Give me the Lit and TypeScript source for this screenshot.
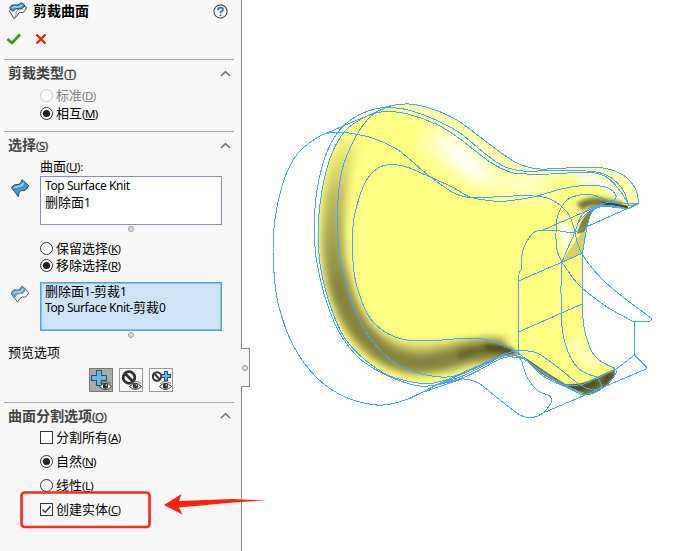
import { LitElement, html, svg, css } from "lit";
import { customElement, property } from "lit/decorators.js";
import { classMap } from "lit/directives/class-map.js";

type Pt = [number, number];

// Smooth cubic path through a list of points.
function smooth(p: number[], closed = false): string {
  const q: Pt[] = [];
  for (let i = 0; i < p.length; i += 2) q.push([p[i], p[i + 1]]);
  const n = q.length;
  const at = (i: number): Pt => (closed ? q[(i + n) % n] : q[Math.max(0, Math.min(n - 1, i))]);
  let d = `M${q[0][0]} ${q[0][1]}`;
  for (let i = 0; i < (closed ? n : n - 1); i++) {
    const a = at(i - 1), b = at(i), c = at(i + 1), e = at(i + 2);
    d += `C${b[0] + (c[0] - a[0]) / 6} ${b[1] + (c[1] - a[1]) / 6} ${c[0] - (e[0] - b[0]) / 6} ${c[1] - (e[1] - b[1]) / 6} ${c[0]} ${c[1]}`;
  }
  return d + (closed ? "Z" : "");
}

const BODY = smooth([
  318, 223, 322, 190, 332, 153, 345, 131, 360, 119, 375, 112, 392, 106, 403, 104, 415, 104, 438, 111,
  460, 122, 493, 147, 507, 157, 520, 164, 540, 169, 577, 167, 603, 168, 623, 175, 635, 188, 639, 203,
  628, 209, 612, 207, 600, 207, 592, 212, 587, 227, 583, 253, 582, 278, 582, 303, 584, 327, 592, 352, 602, 362,
  615, 369, 614, 376, 603, 388, 585, 395, 567, 387, 543, 375, 523, 358, 510, 356, 500, 358, 480, 367,
  460, 376, 432, 383, 418, 383, 392, 376, 365, 360, 345, 337, 332, 310, 322, 277, 318, 250,
], true);

const EDGES: number[][] = [
  // outer sketch profile
  [328, 133, 318, 137, 298, 153, 285, 177, 277, 207, 273.5, 233, 273.5, 265, 278, 303, 293, 345, 317, 378, 345, 397, 372, 404.5, 388, 404.5, 408, 399, 425, 391, 440, 383, 465, 375, 500, 357],
  [325, 134, 332, 132.5, 345, 132.5, 358, 134.5, 375, 139, 398, 150, 428, 175, 452, 192, 466, 197, 482, 197.5, 513, 196, 533, 196, 550, 199, 567, 212, 574, 228, 578, 245, 586, 260, 603, 280, 623, 297, 647, 315, 651.5, 319, 649, 321.5],
  [325, 134, 350, 123, 372, 114, 385, 108, 398, 104.5, 415, 104.5, 438, 111, 460, 122, 493, 147, 507, 157, 520, 164.5, 540, 169, 577, 167.5, 603, 168, 623, 175, 635, 188, 639, 203],
  // rim loops
  [629, 206, 623, 190, 610, 177, 593, 171.5, 557, 170.5, 523, 171, 503, 166, 483, 152, 460, 133, 438, 121, 412, 111, 392, 107.5, 375, 109, 355, 117, 338, 132, 325, 157, 317, 190, 314.5, 217, 314.5, 240, 317, 263, 325, 297, 338, 330, 358, 357, 382, 373, 412, 384.5, 432, 385.5, 465, 377, 500, 359, 512, 357, 523, 359],
  [629, 206, 621, 192, 608, 178, 595, 173, 577, 172.5, 550, 174, 527, 174, 510, 172, 490, 162, 460, 139, 438, 125, 408, 114, 388, 111.5, 372, 114, 358, 121, 345, 131, 332, 153, 323, 185, 318.5, 220, 318.5, 245, 321, 270, 330, 305, 344, 337, 364, 359, 390, 376, 418, 383, 434, 383, 460, 375, 500, 357, 512, 355, 523, 358],
  [392, 105, 380, 110, 368, 119, 355, 138, 342, 170, 337.5, 207, 338, 240, 342, 268, 352, 303, 368, 335, 392, 361, 415, 372, 435, 376.5, 452, 376.5, 470, 370, 500, 356, 513, 351.5, 523, 350.5, 538, 353.5, 560, 369, 580, 385, 590, 389, 598, 389, 601.5, 385, 597, 377],
  [614, 201, 616, 196, 610, 189, 597, 185.5, 583, 185.5, 563, 188.5, 533, 197, 507, 201, 493, 201, 470, 197, 452, 187, 428, 176, 408, 167.5, 393, 164.5, 378, 168, 365, 183, 355, 213, 352.5, 237, 353.5, 267, 357, 287, 368, 315, 382, 330, 398, 338, 412, 340.5, 442, 340, 460, 338.5, 480, 338.5, 497, 343, 518, 353, 540, 371, 563, 384.5, 572, 385.5, 583, 384.5],
  // mouth
  [613, 201, 607, 200, 593, 195, 580, 195, 567, 200, 558, 215, 556, 233, 557, 250, 562, 262, 573, 278, 582, 288, 607, 307, 634, 322],
  [562, 262, 567, 250, 575, 232, 580, 218, 590, 208, 605, 206, 628, 209],
  [575, 232, 580, 220, 594, 209, 608, 205, 628, 209],
  [521, 270, 523, 250, 533, 233, 542, 230.5, 556, 230.5, 570, 232.5, 577, 231],
  [561.5, 262, 561, 293, 562, 327, 568, 352, 578, 368, 588, 374, 597, 377],
  [582.5, 253, 582.5, 303, 584, 327, 592, 352, 602, 362, 615, 369, 615, 375, 603, 388, 585, 395, 567, 387.5, 543, 376, 523, 358, 511, 356],
  [523, 358, 544, 373, 566, 386, 584, 393],
  [628, 209, 612, 207, 600, 207, 592, 212, 587, 227, 582.5, 253],
  // neck
  [521, 270, 518.5, 281, 518.5, 350, 522, 362, 527, 377, 538, 391, 548, 395, 551, 398, 551, 403, 543, 413, 532, 417.5, 520, 415, 500, 400, 480, 384, 470, 380, 460, 379, 440, 383],
];

const STRAIGHT = "M577 231L639 203.5L629 206M542 230.5L607 202L639 204M628 209L639 203M518.5 281L583 253M518.5 332L582 304M649 321.5H634.5V355L615 370L583 384.5M634.5 355L646 366.5V369L543 413M408 399L425 391L462 373L500 356M425 391.5L462 379";

const RIDGE = smooth([349, 140, 337, 185, 333, 235, 336, 272, 346, 306, 362, 333, 386, 354, 415, 363, 445, 360, 470, 353, 506, 349]);
const PART = svg`
  <defs>
    <clipPath id="body"><path d=${BODY}/></clipPath>
    <filter id="b2" filterUnits="userSpaceOnUse" x="242" y="50" width="434" height="400"><feGaussianBlur stdDeviation="2"/></filter>
    <filter id="b5" filterUnits="userSpaceOnUse" x="242" y="50" width="434" height="400"><feGaussianBlur stdDeviation="4.5"/></filter>
    <filter id="b9" filterUnits="userSpaceOnUse" x="242" y="50" width="434" height="400"><feGaussianBlur stdDeviation="9"/></filter>
    <linearGradient id="fade" x1="0" y1="130" x2="0" y2="290" gradientUnits="userSpaceOnUse">
      <stop offset="0" stop-color="#8b8943" stop-opacity="0"/><stop offset=".45" stop-color="#8b8943" stop-opacity=".6"/><stop offset="1" stop-color="#858340"/>
    </linearGradient>
  </defs>
  <path d=${BODY} fill="#ffff83"/>
  <g clip-path="url(#body)" fill="none">
    <path d=${smooth([400, 108, 438, 118, 475, 143, 505, 165, 545, 171, 600, 171, 625, 182, 634, 203])} stroke="#ffffb4" stroke-width="11" filter="url(#b2)"/>
    <path d="M425 135Q455 149 478 170Q500 188 550 184" stroke="#ffffc8" stroke-width="22" filter="url(#b9)"/>
    <path d="M450 146L478 172" stroke="#fff" stroke-width="20" stroke-linecap="round" filter="url(#b9)"/>
    <path d="M456 153L472 167" stroke="#fffff4" stroke-width="8" stroke-linecap="round" filter="url(#b5)"/>
    <path d="M577 179Q600 175 621 198" stroke="#fffff0" stroke-width="8" filter="url(#b2)"/>
    <path d="M340 270Q347 310 368 332Q385 348 415 350Q450 350 495 343" stroke="#d6d46a" stroke-width="14" filter="url(#b5)"/>
    <path d=${RIDGE} stroke="url(#fade)" stroke-width="22" filter="url(#b5)"/>
    <path d="M458 356Q480 346 512 352" stroke="#69672f" stroke-width="7" filter="url(#b2)"/>
    <path d="M485 347Q502 347 517 354" stroke="#47451f" stroke-width="4" filter="url(#b2)"/>
    <path d="M579 207Q590 200 604 203L622 207" stroke="#77753b" stroke-width="9" filter="url(#b2)"/>
    <path d="M602 203L628 207" stroke="#48461f" stroke-width="2.500"/>
    <path d="M587 217L582 232L568 252L562 263L583 253Z" fill="#d2d066"/>
    <path d="M598 206Q582 213 577 234L584 232Z" fill="#85833c"/>
    <path d="M562 218Q558 238 563 252Q571 240 573 230Z" fill="#fffff0" filter="url(#b2)"/>
    <path d="M573 340Q582 356 596 366" stroke="#ffffbd" stroke-width="12" filter="url(#b5)"/>
    <path d="M525 360Q546 375 568 388" stroke="#77753a" stroke-width="4"/>
    <path d="M563 384Q582 386 597 377L615 369L614 378L600 391L585 395Z" fill="#77753a"/>
    <path d="M568 388Q585 390 597 382M603 383L612 373" stroke="#454320" stroke-width="5" filter="url(#b2)"/>
  </g>
  <g class="wire">${EDGES.map((e) => svg`<path d=${smooth(e)}/>`)}<path d=${STRAIGHT}/></g>`;

const EYE = svg`<path d="M10.500 18.500Q16.500 12 22.500 18.500Q16.500 24.500 10.500 18.500Z" fill="#fff" stroke="#333" stroke-width="1"/><circle cx="16.500" cy="18" r="2.700" fill="#333"/><circle cx="17.300" cy="17" r=".8" fill="#fff"/><path d="M11 15.500Q16.500 11.500 22 15.500" fill="none" stroke="#555" stroke-width=".8"/>`;

@customElement("option-row")
class OptionRow extends LitElement {
  @property() kind = "radio";
  @property() label = "";
  @property() hotkey = "";
  @property({ type: Boolean }) checked = false;
  @property({ type: Boolean, reflect: true }) disabled = false;
  static styles = css`
    :host { display: flex; align-items: center; gap: 3px; padding-left: 40px; line-height: 17px; white-space: nowrap; }
    :host([disabled]) { color: #808080; }
    .mark { width: 13px; height: 13px; flex: none; }
    .line { fill: #fff; stroke: #333; }
    :host([disabled]) .line { stroke: #c8c8c8; }
    .dot { fill: #222; }
    .tick { fill: none; stroke: #333; stroke-width: 1.3; }
    .key { font-size: 11.5px; letter-spacing: -.6px; }
  `;
  render() {
    return html`<svg class="mark" viewBox="0 0 13 13">
        ${this.kind === "radio" ? svg`<circle class="line" cx="6.5" cy="6.5" r="6"/>` : svg`<rect class="line" x=".5" y=".5" width="12" height="12"/>`}
        ${this.checked ? (this.kind === "radio" ? svg`<circle class="dot" cx="6.5" cy="6.5" r="3.6"/>` : svg`<path class="tick" d="M2.5 6.5 5.2 9.3 10.6 3.3"/>`) : null}
      </svg><span>${this.label}<span class="key">(<u>${this.hotkey}</u>)</span></span>`;
  }
}

@customElement("section-head")
class SectionHead extends LitElement {
  @property() label = "";
  @property() hotkey = "";
  static styles = css`
    :host { display: flex; justify-content: space-between; align-items: center; height: 26px; border-top: 1px solid #aaa; margin: 0 7px 0 4px; padding: 0 3px 0 4px; color: #444; }
    b { font-size: 14px; font-weight: 700; }
    .key { font-size: 11.5px; letter-spacing: -.5px; -webkit-text-stroke: .3px #444; }
    svg { width: 11px; height: 7px; }
  `;
  render() {
    return html`<span><b>${this.label}</b><span class="key">(<u>${this.hotkey}</u>)</span></span>
      <svg viewBox="0 0 11 7"><path d="M1 6 5.5 1.6 10 6" fill="none" stroke="#777" stroke-width="1.7"/></svg>`;
  }
}

@customElement("app-root")
class AppRoot extends LitElement {
  static styles = css`
    :host { display: block; position: relative; width: 676px; height: 551px; overflow: hidden; background: #fff; color: #000; font: 13px/17px "Noto Sans", "Noto Sans CJK SC", sans-serif; }
    .window { display: flex; height: 551px; }
    .panel { width: 241px; height: 551px; flex: none; box-sizing: content-box; background: #f7f7f7; border-right: 1px solid #858585; }
    .title { display: flex; align-items: center; height: 22px; padding: 0 13px 0 8px; }
    .title b { font-size: 14px; margin: -2px 0 0 5px; flex: 1; }
    .title svg { display: block; }
    .actions { display: flex; align-items: center; height: 33px; padding: 0 0 4px 6px; gap: 13px; }
    .group { padding-bottom: 9px; }
    .group option-row { height: 18px; }
    .caption { height: 14px; line-height: 14px; padding: 1px 0 3px 40px; }
    .key { font-size: 11.5px; letter-spacing: -.4px; }
    .field { display: flex; align-items: flex-start; padding-left: 10px; }
    .field svg { width: 20px; height: 20px; margin: 2px 10px 0 0; }
    .list { box-sizing: border-box; width: 182px; height: 49px; padding: 1px 4px; border: 1px solid #8b8fae; background: #fff; line-height: 16px; white-space: nowrap; }
    .row { height: 16px; }
    .list.active { border: 1px solid #4aa6dc; box-shadow: inset 0 0 0 1px #7fc0ea; background: #cfe3f7; padding-top: 0; }
    .latin { font-size: 12px; letter-spacing: -.42px; }
    .grip { display: block; width: 4px; height: 4px; margin: 1px 0 0 128px; border: 1px solid #999; border-radius: 50%; background: #ddd; }
    .keep { padding: 8px 0; }
    .keep option-row { height: 17px; }
    .preview { padding: 6px 0 7px 8px; }
    .tools { display: flex; gap: 6px; padding: 0 0 10px 89px; }
    .tool { box-sizing: border-box; width: 24px; height: 24px; border: 1px solid #999; background: #f9f9f9; }
    .tool.on { background: #aaa; border-color: #777; }
    .tool svg { display: block; width: 24px; height: 24px; margin: -1px; }
    .split option-row { height: 24px; }
    .split section-head { height: 25px; margin-bottom: -3px; }
    .view { width: 434px; height: 551px; flex: none; }
    .wire { fill: none; stroke: #4ba3f7; stroke-width: 1; shape-rendering: crispEdges; }
    .handle { position: absolute; left: 241px; top: 348px; width: 8px; height: 37px; border: 1px solid #858585; border-left: 0; background: #f7f7f7; display: flex; align-items: center; }
    .handle .grip { margin: 0 0 0 1px; }
    .note { position: absolute; left: 0; top: 485px; width: 280px; height: 50px; }
  `;
  private plus(x: number, y: number, s: number) {
    return svg`<path transform="translate(${x} ${y}) scale(${s})" d="M5 0H10V5H15V10H10V15H5V10H0V5H5Z" fill="#6fb7d9" stroke="#1d5574" stroke-width=${1.1 / s}/>`;
  }
  private tool(on: boolean, art: unknown) {
    return html`<div class=${classMap({ tool: true, on })}><svg viewBox="0 0 24 24">${art}${EYE}</svg></div>`;
  }
  render() {
    return html`<div class="window">
      <div class="panel">
        <div class="title">
          <svg width="20" height="20" viewBox="24 3 60 60">
            <path d="M28 32 38 24 52 26 66 16 80 22Q72 42 62 37Q56 36 52 46L42 56Z" fill="#f1f4f6" stroke="#444" stroke-width="3" stroke-linejoin="round"/>
            <path d="M42 54Q52 46 48 36L58 26" fill="none" stroke="#8b9299" stroke-width="3"/>
            <path d="M29 24Q34 12 43 15Q54 18 64 8L74 15Q68 31 57 26Q46 24 38 34Z" fill="#4a9cc4" stroke="#23475c" stroke-width="3" stroke-linejoin="round"/>
            <path d="M36 24Q42 18 50 22Q60 22 66 14" fill="none" stroke="#a5d3e8" stroke-width="4"/>
          </svg>
          <b>剪裁曲面</b>
          <svg width="15" height="15" viewBox="0 0 15 15"><circle cx="7.5" cy="7.5" r="6.6" fill="#f4f8fa" stroke="#4a4f55" stroke-width="1.1"/><path d="M5 6Q5 3.6 7.5 3.6Q10 3.6 10 5.6Q10 6.8 8.5 7.5Q7.5 8 7.5 9.2M7.5 10.4V12" fill="none" stroke="#1e7295" stroke-width="1.7"/></svg>
        </div>
        <div class="actions">
          <svg width="16" height="14" viewBox="0 0 16 14"><path d="M1.500 7 6 11 14 2.500" fill="none" stroke="#35980e" stroke-width="2.6"/></svg>
          <svg width="12" height="12" viewBox="0 0 12 12"><path d="M1.5 1.5 10.5 10.5M10.5 1.5 1.5 10.5" stroke="#dc2508" stroke-width="2.3"/></svg>
        </div>
        <div class="group">
          <section-head label="剪裁类型" hotkey="T"></section-head>
          <option-row label="标准" hotkey="D" disabled></option-row>
          <option-row label="相互" hotkey="M" checked></option-row>
        </div>
        <section-head label="选择" hotkey="S"></section-head>
        <div class="caption">曲面<span class="key">(<u>U</u>):</span></div>
        <div class="field">
          <svg viewBox="0 0 60 60">
            <path d="M4 28Q14 17 27 19Q34 14 36 5L56 23Q46 42 36 37Q26 40 25 56Z" fill="#4695bd" stroke="#1d4c66" stroke-width="3" stroke-linejoin="round"/>
            <path d="M12 29Q24 24 32 24Q39 21 40 14" fill="none" stroke="#a5d8ec" stroke-width="5"/>
          </svg>
          <div class="list"><div class="row latin">Top Surface Knit</div><div class="row">删除面<span class="latin">1</span></div></div>
        </div>
        <span class="grip"></span>
        <div class="keep">
          <option-row label="保留选择" hotkey="K"></option-row>
          <option-row label="移除选择" hotkey="R" checked></option-row>
        </div>
        <div class="field">
          <svg viewBox="0 0 60 60">
            <path d="M4 30Q8 13 22 19Q32 18 36 6L56 25Q50 43 38 39Q29 40 23 54Z" fill="#f4f6f7" stroke="#555" stroke-width="3" stroke-linejoin="round"/>
            <path d="M4 30Q8 13 22 19Q32 18 36 6L46 15Q42 31 31 28Q20 28 14 41Z" fill="#5fa9cc" stroke="#397491" stroke-width="2"/>
            <path d="M11 28Q19 20 28 24Q36 24 39 14" fill="none" stroke="#b3dcec" stroke-width="4"/>
          </svg>
          <div class="list active"><div class="row">删除面<span class="latin">1-</span>剪裁<span class="latin">1</span></div><div class="row"><span class="latin">Top Surface Knit-</span>剪裁<span class="latin">0</span></div></div>
        </div>
        <span class="grip"></span>
        <div class="preview">预览选项</div>
        <div class="tools">
          ${this.tool(true, this.plus(2.5, 2.5, 1))}
          ${this.tool(false, svg`<circle cx="10" cy="9.500" r="5.800" fill="none" stroke="#333" stroke-width="2.800"/><path d="M6 5.500 14 13.500" stroke="#333" stroke-width="2.800"/>`)}
          ${this.tool(false, svg`<circle cx="8" cy="8.500" r="4.200" fill="none" stroke="#333" stroke-width="1.900"/><path d="M5 5.500 11 11.500" stroke="#333" stroke-width="1.900"/>${this.plus(12.5, 3.500, 0.6)}`)}
        </div>
        <div class="split">
          <section-head label="曲面分割选项" hotkey="O"></section-head>
          <option-row kind="check" label="分割所有" hotkey="A"></option-row>
          <option-row label="自然" hotkey="N" checked></option-row>
          <option-row label="线性" hotkey="L"></option-row>
          <option-row kind="check" label="创建实体" hotkey="C" checked></option-row>
        </div>
      </div>
      <svg class="view" viewBox="242 0 434 551">${PART}</svg>
    </div>
    <div class="handle"><span class="grip"></span></div>
    <svg class="note" viewBox="0 485 280 50"><rect x="21.500" y="492.500" width="128" height="34.500" rx="3" fill="none" stroke="#ff2818" stroke-width="2.600"/><path d="M164 505 181.500 494 179 501 233 499 266 500.300 233 502.500 179 507.500 182.500 514.500Z" fill="#ff2010"/></svg>`;
  }
}
